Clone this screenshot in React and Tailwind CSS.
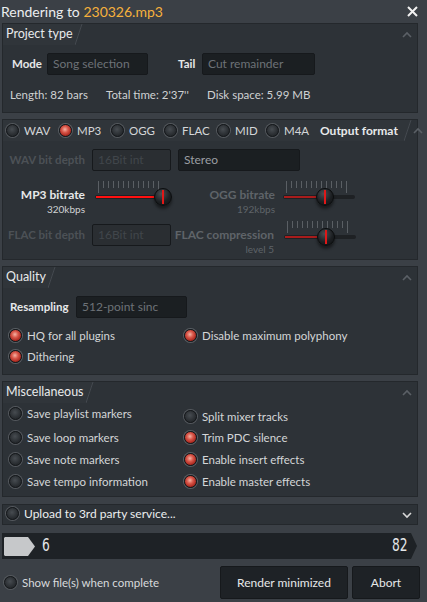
import React from "react";

const font = { fontFamily: 'Lato, "Noto Sans", sans-serif' };
const numFont = {
  fontFamily: '"DejaVu Sans Condensed", "Liberation Sans Narrow", sans-serif',
  transform: "scaleX(0.8)",
};

function Radio({ on }) {
  return (
    <span
      className={
        "inline-block h-[13px] w-[13px] shrink-0 rounded-full border border-[#15181b] " +
        (on
          ? "bg-[radial-gradient(circle_at_45%_40%,#f4b3a4_0%,#d9574a_35%,#a8281f_70%,#5c1812_100%)] shadow-[0_0_0_1px_#5a5f64]"
          : "bg-[radial-gradient(circle_at_45%_40%,#474c51_0%,#2a2e32_60%,#1b1e21_100%)] shadow-[0_0_0_1px_#55595e]")
      }
    />
  );
}

function Chevron({ down }) {
  return (
    <svg width="12" height="8" viewBox="0 0 12 8" className="shrink-0">
      <path
        d={down ? "M2 2 L6 6 L10 2" : "M2 6 L6 2 L10 6"}
        fill="none"
        stroke={down ? "#d8d8d8" : "#5b6066"}
        strokeWidth="1.6"
      />
    </svg>
  );
}

function Slant() {
  return (
    <svg width="8" height="21" viewBox="0 0 8 21" className="shrink-0">
      <polygon points="0,0 7,0 0,21" fill="#30353a" />
      <line x1="7" y1="0" x2="0" y2="21" stroke="#44494f" strokeWidth="1" />
    </svg>
  );
}

function Header({ children }) {
  return (
    <div className="flex h-[21px] items-stretch">
      <div className="flex items-center bg-[#30353a] pl-[3px] pr-[2px]">{children}</div>
      <Slant />
      <div className="flex-1" />
      <div className="flex w-[20px] items-center justify-center">
        <Chevron />
      </div>
    </div>
  );
}

function Box({ w, children, dim }) {
  return (
    <div
      className={
        "flex h-[22px] shrink-0 items-center rounded-[2px] border border-[#16191c] px-[5px] text-[12px] " +
        (dim ? "bg-[#2a2e32] text-[#41464b]" : "bg-[#1b1f22] text-[#6d7277]")
      }
      style={{ width: w }}
    >
      {children}
    </div>
  );
}

function Slider({ pos, bright }) {
  const ticks = Array.from({ length: 13 });
  return (
    <div className="relative h-[34px] w-[72px] shrink-0">
      <div className="absolute left-[3px] right-[8px] top-[5px] flex h-[8px] justify-between">
        {ticks.map((_, i) => (
          <span
            key={i}
            className={"w-px bg-[#5a5f64] " + (i === 0 || i === 12 ? "h-[12px]" : "h-[7px]")}
          />
        ))}
      </div>
      <div className="absolute left-0 right-0 top-[19px] h-[4px] rounded-full bg-[#1e2124]" />
      <div
        className={"absolute left-[1px] top-[20px] h-[2px] " + (bright ? "bg-[#ff1010]" : "bg-[#a81c1c]")}
        style={{ width: pos }}
      />
      <div
        className="absolute top-[12px] flex h-[18px] w-[18px] items-center justify-center rounded-full border border-[#0b0d0e] bg-[radial-gradient(circle_at_40%_30%,#4a4f54_0%,#1d2023_55%,#0e1012_100%)] shadow-[0_3px_3px_rgba(0,0,0,0.45)]"
        style={{ left: pos - 9 }}
      >
        <span className="h-[14px] w-[2px] bg-[#e01818]" />
      </div>
    </div>
  );
}

function Item({ on, label, className = "" }) {
  return (
    <div className={"flex items-center gap-[5px] whitespace-nowrap text-[11.5px] text-[#d4d6d8] " + className}>
      <Radio on={on} />
      <span>{label}</span>
    </div>
  );
}

export default function App() {
  return (
    <div className="h-[602px] w-[427px] overflow-hidden bg-[#3b4046] text-[11.5px] text-[#d4d6d8]" style={font}>
      {/* title */}
      <div className="flex h-[23px] items-center justify-between pl-[1px] pr-[9px]">
        <div className="text-[14px] text-[#eceeef]">
          Rendering to <span className="text-[#f6b13c]">230326.mp3</span>
        </div>
        <svg width="11" height="11" viewBox="0 0 11 11">
          <path d="M1 1 L10 10 M10 1 L1 10" stroke="#f2f2f2" strokeWidth="2" />
        </svg>
      </div>

      <div className="flex w-[418px] flex-col gap-[6px] pl-[2px]">
        {/* Project type */}
        <div className="h-[90px] border border-[#24282c] bg-[#2d3237]">
          <Header>
            <span className="text-[12.5px] text-[#e8eaeb]">Project type</span>
          </Header>
          <div className="mt-[8px] flex items-center pl-[9px]">
            <span className="w-[35px] font-bold text-[#e6e8e9]">Mode</span>
            <Box w={101}>Song selection</Box>
            <span className="ml-[30px] w-[24px] font-bold text-[#e6e8e9]">Tail</span>
            <Box w={113}>Cut remainder</Box>
          </div>
          <div className="mt-[11px] flex pl-[7px] text-[#cfd1d3]">
            <span className="w-[96px]">Length: 82 bars</span>
            <span className="w-[101px]">Total time: 2'37''</span>
            <span>Disk space: 5.99 MB</span>
          </div>
        </div>

        {/* Output format */}
        <div className="h-[141px] border border-[#24282c] bg-[#2d3237]">
          <div className="flex h-[21px] items-stretch">
            <div className="flex items-center bg-[#30353a] pl-[3px]">
              <Item label="WAV" className="w-[53px]" />
              <Item on label="MP3" className="w-[52px]" />
              <Item label="OGG" className="w-[53px]" />
              <Item label="FLAC" className="w-[53px]" />
              <Item label="MID" className="w-[49px]" />
              <Item label="M4A" className="w-[48px]" />
              <span className="ml-[6px] w-[84px] whitespace-nowrap text-[12px] font-bold text-[#e8eaeb]">
                Output format
              </span>
            </div>
            <Slant />
            <div className="flex-1" />
            <div className="flex w-[20px] items-center justify-center">
              <Chevron />
            </div>
          </div>
          <div className="mt-[8px] flex items-center">
            <span className="w-[82px] whitespace-nowrap text-right font-bold text-[#4c5156]">WAV bit depth</span>
            <div className="ml-[7px]">
              <Box w={79} dim>16Bit int</Box>
            </div>
            <div className="ml-[7px]">
              <Box w={122}>
                <span className="text-[#9a9ea2]">Stereo</span>
              </Box>
            </div>
          </div>
          <div className="flex h-[48px] items-start">
            <div className="mt-[17px] flex w-[82px] flex-col items-end leading-[14px]">
              <span className="whitespace-nowrap text-[12px] font-bold text-[#e6e8e9]">MP3 bitrate</span>
              <span className="text-[10px] text-[#d0d2d4]">320kbps</span>
            </div>
            <div className="ml-[10px] mt-[5px]">
              <Slider pos={68} bright />
            </div>
            <div className="mt-[17px] flex w-[108px] flex-col items-end leading-[14px]">
              <span className="whitespace-nowrap text-[12px] font-bold text-[#5f6469]">OGG bitrate</span>
              <span className="text-[10px] text-[#5f6469]">192kbps</span>
            </div>
            <div className="ml-[8px] mt-[5px]">
              <Slider pos={42} />
            </div>
          </div>
          <div className="flex items-start">
            <div className="mt-[5px] flex items-center">
              <span className="w-[82px] whitespace-nowrap text-right font-bold text-[#4c5156]">FLAC bit depth</span>
              <div className="ml-[7px]">
                <Box w={79} dim>16Bit int</Box>
              </div>
            </div>
            <div className="mt-[9px] flex w-[103px] flex-col items-end leading-[14px]">
              <span className="whitespace-nowrap text-[12px] font-bold text-[#5f6469]">FLAC compression</span>
              <span className="text-[10px] text-[#5f6469]">level 5</span>
            </div>
            <div className="ml-[10px] mt-[-3px]">
              <Slider pos={42} />
            </div>
          </div>
        </div>

        {/* Quality */}
        <div className="h-[109px] border border-[#24282c] bg-[#2d3237]">
          <Header>
            <span className="text-[12.5px] text-[#e8eaeb]">Quality</span>
          </Header>
          <div className="mt-[8px] flex items-center pl-[7px]">
            <span className="w-[66px] font-bold text-[#e6e8e9]">Resampling</span>
            <Box w={111}>512-point sinc</Box>
          </div>
          <div className="mt-[9px] grid grid-cols-[175px_1fr] gap-y-[4px] pl-[6px]">
            <Item on label="HQ for all plugins" className="h-[17px]" />
            <Item on label="Disable maximum polyphony" className="h-[17px]" />
            <Item on label="Dithering" className="h-[17px]" />
          </div>
        </div>

        {/* Miscellaneous */}
        <div className="h-[116px] border border-[#24282c] bg-[#2d3237]">
          <Header>
            <span className="text-[12.5px] text-[#e8eaeb]">Miscellaneous</span>
          </Header>
          <div className="mt-[2px] flex pl-[6px]">
            <div className="flex w-[175px] flex-col">
              <Item label="Save playlist markers" className="h-[17px]" />
              <Item label="Save loop markers" className="mt-[7px] h-[17px]" />
              <Item label="Save note markers" className="mt-[5px] h-[17px]" />
              <Item label="Save tempo information" className="mt-[5px] h-[17px]" />
            </div>
            <div className="mt-[3px] flex flex-col">
              <Item label="Split mixer tracks" className="h-[17px]" />
              <Item on label="Trim PDC silence" className="mt-[4px] h-[17px]" />
              <Item on label="Enable insert effects" className="mt-[5px] h-[17px]" />
              <Item on label="Enable master effects" className="mt-[5px] h-[17px]" />
            </div>
          </div>
        </div>

        {/* Upload */}
        <div className="mt-[1px] flex h-[21px] items-center border border-[#24282c] bg-[#2d3237] pl-[3px]">
          <Item label="Upload to 3rd party service..." className="gap-[3px] pb-[2px] text-[12px] text-[#eceeef]" />
          <div className="flex-1" />
          <div className="flex w-[20px] items-center justify-center">
            <Chevron down />
          </div>
        </div>

        {/* Progress */}
        <div className="mt-[2px] flex h-[26px] items-stretch">
          <div className="relative flex flex-1 items-center bg-[#1e2226] pl-[2px]">
            <svg width="31" height="19" viewBox="0 0 31 19" className="shrink-0">
              <polygon points="1,0 24,0 31,9.5 24,19 1,19 0,18 0,1" fill="#c6c8ca" />
            </svg>
            <span className="ml-[6px] text-[17px] text-[#e4e6e8]" style={numFont}>
              6
            </span>
            <div className="flex-1" />
            <span className="mr-[1px] text-[17px] text-[#e4e6e8]" style={numFont}>
              82
            </span>
          </div>
          <svg width="8" height="26" viewBox="0 0 8 26" className="shrink-0">
            <polygon points="0,0 1,0 7,13 1,26 0,26" fill="#1e2226" />
          </svg>
        </div>
      </div>

      {/* bottom */}
      <div className="mt-[7px] flex items-center pl-[4px]">
        <Item label="Show file(s) when complete" className="gap-[3px] text-[#d8dadc]" />
        <div className="flex-1" />
        <button className="h-[33px] w-[128px] rounded-[2px] border border-[#16191c] bg-[#1e2226] text-[12px] text-[#e6e8e9]">
          Render minimized
        </button>
        <button className="ml-[4px] mr-[7px] h-[33px] w-[68px] rounded-[2px] border border-[#16191c] bg-[#1e2226] text-[12px] text-[#e6e8e9]">
          Abort
        </button>
      </div>
    </div>
  );
}
